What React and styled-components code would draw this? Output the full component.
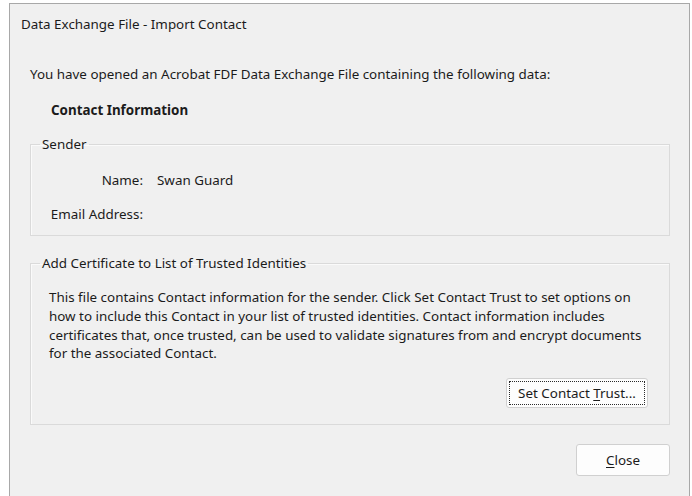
import React from "react";
import styled, { createGlobalStyle } from "styled-components";

const GlobalStyle = createGlobalStyle`
  html, body {
    margin: 0;
    padding: 0;
    background: #ffffff;
  }
  body {
    font-family: "Noto Sans", "Open Sans", sans-serif;
    font-size: 13.4px;
    color: #1b1b1b;
  }
`;

const Dialog = styled.div`
  box-sizing: border-box;
  margin: 3px 2px 0 9px;
  height: 493px;
  background: #f0f0f0;
  border: 1px solid #a8a8a8;
  border-bottom: none;
  display: flex;
  flex-direction: column;
  overflow: hidden;
`;

const TitleBar = styled.div`
  padding: 10px 0 0 11px;
  height: 30px;
  font-size: 13.4px;
  line-height: 20px;
  white-space: nowrap;
`;

const Content = styled.div`
  padding: 20px 19px 0 20px;
  display: flex;
  flex-direction: column;
`;

const Intro = styled.div`
  line-height: 20px;
  white-space: nowrap;
`;

const SectionHeading = styled.div`
  margin: 16px 0 0 21px;
  font-weight: 700;
  line-height: 20px;
`;

const Group = styled.fieldset`
  margin: ${(p) => p.$top}px 0 0 0;
  padding: 0 10px 0 9px;
  border: 1px solid #dadada;
  box-shadow: inset 1px 1px 0 #fafafa;
  min-height: ${(p) => p.$height}px;
  box-sizing: border-box;
`;

const Legend = styled.legend`
  padding: 0 2px;
  line-height: 18px;
`;

const FieldGrid = styled.div`
  display: grid;
  grid-template-columns: 94px auto;
  column-gap: 14px;
  row-gap: 14px;
  padding: 17px 0 0 9px;
`;

const FieldLabel = styled.div`
  text-align: right;
  line-height: 20px;
  white-space: nowrap;
`;

const FieldValue = styled.div`
  line-height: 20px;
`;

const Paragraph = styled.div`
  padding: 16px 0 0 9px;
  line-height: 18.8px;
  span {
    display: block;
    white-space: nowrap;
  }
`;

const ButtonRow = styled.div`
  display: flex;
  justify-content: flex-end;
  padding: ${(p) => p.$pad};
`;

const Button = styled.button`
  box-sizing: border-box;
  width: ${(p) => p.$width}px;
  height: ${(p) => p.$height}px;
  background: #fdfdfd;
  border: 1px solid #d0d0d0;
  border-radius: 3px;
  font-family: inherit;
  font-size: 13.4px;
  color: #1b1b1b;
  padding: 2px;
  u {
    text-decoration: underline;
    text-underline-offset: 2px;
  }
`;

const FocusRing = styled.span`
  display: flex;
  align-items: center;
  justify-content: center;
  height: 100%;
  border: 1px dotted ${(p) => (p.$on ? "#2a2a2a" : "transparent")};
  box-sizing: border-box;
  white-space: nowrap;
`;

function TrustButtonRow() {
  return (
    <ButtonRow $pad="15px 11px 16px 0">
      <Button $width={142} $height={30}>
        <FocusRing $on>
          <span>
            Set Contact <u>T</u>rust...
          </span>
        </FocusRing>
      </Button>
    </ButtonRow>
  );
}

export default function App() {
  return (
    <>
      <GlobalStyle />
      <Dialog>
        <TitleBar>Data Exchange File - Import Contact</TitleBar>
        <Content>
          <Intro>
            You have opened an Acrobat FDF Data Exchange File containing the following data:
          </Intro>
          <SectionHeading>Contact Information</SectionHeading>

          <Group $top={15} $height={101}>
            <Legend>Sender</Legend>
            <FieldGrid>
              <FieldLabel>Name:</FieldLabel>
              <FieldValue>Swan Guard</FieldValue>
              <FieldLabel>Email Address:</FieldLabel>
              <FieldValue />
            </FieldGrid>
          </Group>

          <Group $top={18}>
            <Legend>Add Certificate to List of Trusted Identities</Legend>
            <Paragraph>
              <span>This file contains Contact information for the sender. Click Set Contact Trust to set options on</span>
              <span>how to include this Contact in your list of trusted identities. Contact information includes</span>
              <span>certificates that, once trusted, can be used to validate signatures from and encrypt documents</span>
              <span>for the associated Contact.</span>
            </Paragraph>
            <TrustButtonRow />
          </Group>

          <ButtonRow $pad="19px 0 0 0">
            <Button $width={94} $height={32}>
              <FocusRing>
                <span>
                  <u>C</u>lose
                </span>
              </FocusRing>
            </Button>
          </ButtonRow>
        </Content>
      </Dialog>
    </>
  );
}
